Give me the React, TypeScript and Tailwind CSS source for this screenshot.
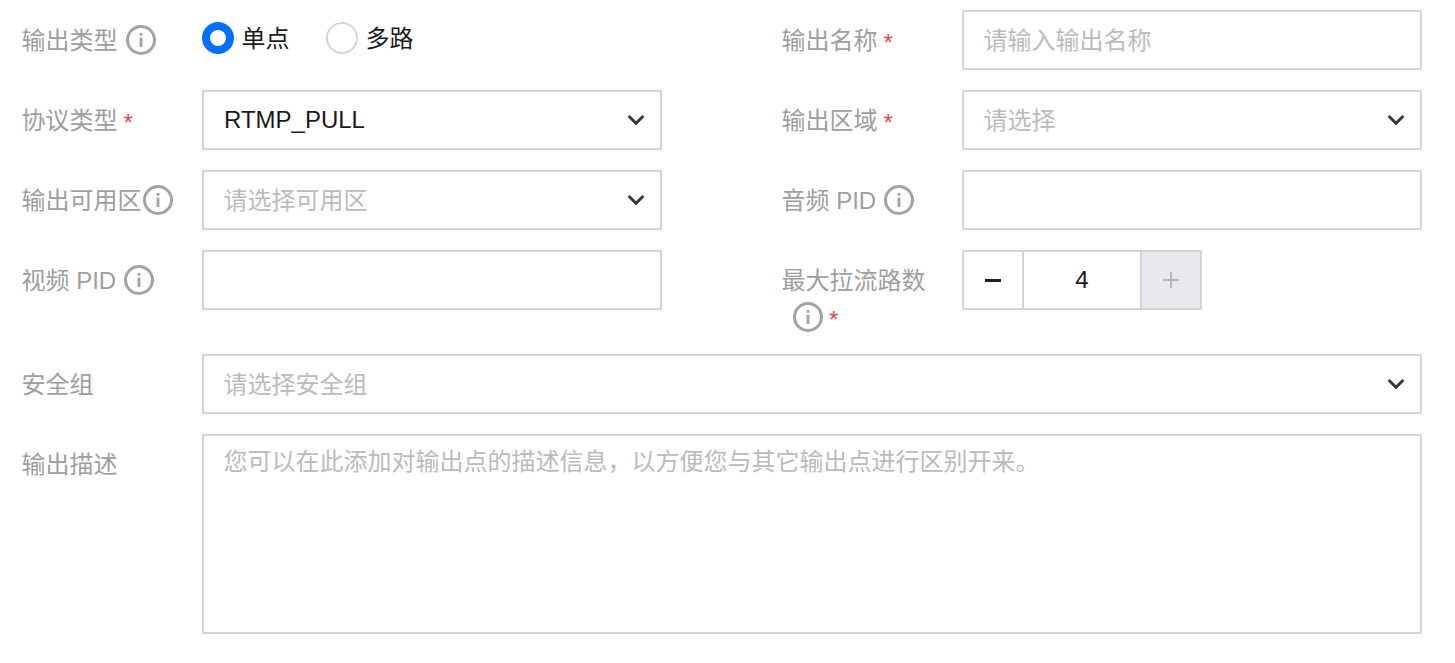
import React from "react";

const InfoIcon = () => (
  <svg width="30" height="30" viewBox="0 0 30 30" fill="none" className="shrink-0">
    <circle cx="15" cy="15" r="13.5" stroke="#a3a3a3" strokeWidth="3" />
    <rect x="13.6" y="8" width="2.8" height="2.8" fill="#a3a3a3" />
    <rect x="13.6" y="12.6" width="2.8" height="9.4" fill="#a3a3a3" />
  </svg>
);

const Chevron = () => (
  <svg width="18" height="12" viewBox="0 0 18 12" fill="none" className="shrink-0">
    <path d="M1.6 2 L9 9.2 L16.4 2" stroke="#333" strokeWidth="2.8" />
  </svg>
);

const Star = () => <span className="text-[#e54545] text-[24px] ml-[6px] mt-[6px]">*</span>;

const Label = ({ children }: { children: React.ReactNode }) => (
  <div className="w-[180.5px] shrink-0 flex items-center flex-wrap h-[60px] text-[24px] text-[#9e9e9e]">{children}</div>
);

const Input = ({ placeholder }: { placeholder?: string }) => (
  <div className="w-[460px] h-[60px] border-2 border-[#cfd5de] pl-[19.5px] pr-5 flex items-center text-[24px] text-[#bbbbbb]">
    <span className="pt-[2px]">{placeholder}</span>
  </div>
);

const Select = ({ value, placeholder, wide }: { value?: string; placeholder?: string; wide?: boolean }) => (
  <div
    className={
      wide
        ? "w-[1220px] h-[60px] border-2 border-[#cfd5de] pl-5 pr-[15px] flex items-center justify-between text-[24px]"
        : "w-[460px] h-[60px] border-2 border-[#cfd5de] pl-5 pr-[15px] flex items-center justify-between text-[24px]"
    }
  >
    {value ? (
      <span className="text-[#1a1a1a]">{value}</span>
    ) : (
      <span className="text-[#bbbbbb] pt-[2px] ml-[-0.5px]">{placeholder}</span>
    )}
    <Chevron />
  </div>
);

const Radio = ({ checked, label }: { checked?: boolean; label: string }) => (
  <div className="flex items-center gap-2">
    {checked ? (
      <span className="w-8 h-8 rounded-full border-[8px] border-[#006eff] bg-white" />
    ) : (
      <span className="w-8 h-8 rounded-full border-2 border-[#cfd5de] bg-white" />
    )}
    <span className="text-[24px] text-[#1a1a1a] ml-[-0.5px] pt-[2px]">{label}</span>
  </div>
);

export default function App() {
  return (
    <div
      className="w-[1455px] h-[663px] bg-white pl-[21.5px] pt-[10px] flex flex-col gap-5"
      style={{ fontFamily: '"Liberation Sans", "Noto Sans CJK SC", sans-serif' }}
    >
      <div className="grid grid-cols-[640.5px_640.5px] gap-x-[119.5px] gap-y-5 w-[1400.5px]">
        <div className="flex">
          <Label>
            <span className="pt-[2px]">输出类型</span>
            <span className="ml-2 flex">
              <InfoIcon />
            </span>
          </Label>
          <div className="flex items-start gap-[36.5px] pt-[12px] mt-[-3px] h-[60px]">
            <Radio checked label="单点" />
            <Radio label="多路" />
          </div>
        </div>
        <div className="flex">
          <Label>
            <span className="pt-[2px]">输出名称</span>
            <Star />
          </Label>
          <Input placeholder="请输入输出名称" />
        </div>

        <div className="flex">
          <Label>
            <span className="pt-[2px]">协议类型</span>
            <Star />
          </Label>
          <Select value="RTMP_PULL" />
        </div>
        <div className="flex">
          <Label>
            <span className="pt-[2px]">输出区域</span>
            <Star />
          </Label>
          <Select placeholder="请选择" />
        </div>

        <div className="flex">
          <Label>
            <span className="pt-[2px]">输出可用区</span>
            <span className="ml-[1.5px] flex">
              <InfoIcon />
            </span>
          </Label>
          <Select placeholder="请选择可用区" />
        </div>
        <div className="flex">
          <Label>
            <span className="pt-[2px]">音频 PID</span>
            <span className="ml-2 flex">
              <InfoIcon />
            </span>
          </Label>
          <Input />
        </div>

        <div className="flex">
          <Label>
            <span className="pt-[2px]">视频 PID</span>
            <span className="ml-2 flex">
              <InfoIcon />
            </span>
          </Label>
          <Input />
        </div>
        <div className="flex">
          <div className="w-[180.5px] shrink-0 text-[24px] text-[#9e9e9e] pt-[13px] h-[84px]">
            <div className="leading-[36px]">最大拉流路数</div>
            <div className="flex items-center pl-[11.5px] mt-[-3px]">
              <InfoIcon />
              <Star />
            </div>
          </div>
          <div className="flex h-[60px] w-[240px] border-2 border-[#cfd5de]">
            <div className="w-[60px] flex items-center justify-center border-r-2 border-[#cfd5de]">
              <span className="w-4 h-[3px] bg-[#222222]" />
            </div>
            <div className="w-[116px] flex items-center justify-center text-[24px] text-[#1a1a1a]">4</div>
            <div className="flex-1 relative flex items-center justify-center border-l-2 border-[#cfd5de] bg-[#e7e9ed]">
              <span className="w-4 h-[2px] bg-[#b5b8bd]" />
              <span className="absolute w-[2px] h-4 bg-[#b5b8bd]" />
            </div>
          </div>
        </div>
      </div>

      <div className="flex">
        <Label>
          <span className="pt-[2px]">安全组</span>
        </Label>
        <Select wide placeholder="请选择安全组" />
      </div>

      <div className="flex">
        <div className="w-[180.5px] shrink-0 text-[24px] text-[#9e9e9e] pt-[13px]">输出描述</div>
        <div className="w-[1220px] h-[200px] border-2 border-[#cfd5de] pl-[19.5px] pr-5 pt-[8px] text-[24px] text-[#bbbbbb]">
          您可以在此添加对输出点的描述信息，以方便您与其它输出点进行区别开来。
        </div>
      </div>
    </div>
  );
}
